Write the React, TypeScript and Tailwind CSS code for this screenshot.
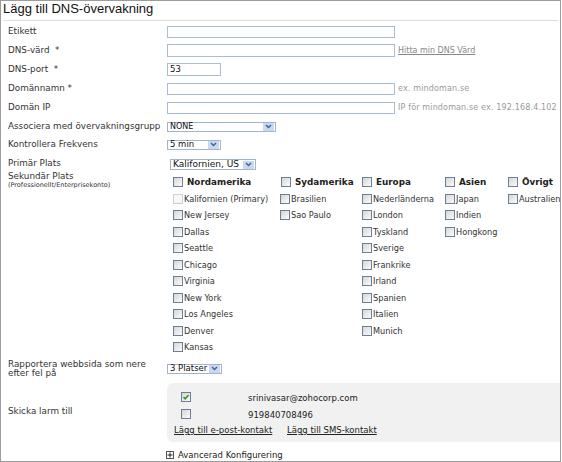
import React from "react";

function Cb({ disabled, checked }: { disabled?: boolean; checked?: boolean }) {
  return (
    <span
      className={
        "inline-flex shrink-0 w-[10px] h-[10px] border items-center justify-center " +
        (disabled
          ? "border-[#cfcfcf] bg-[#f7f7f7]"
          : "border-[#6d7f98] bg-gradient-to-br from-[#d6d6d6] to-[#fbfbfb]")
      }
    >
      {checked && (
        <svg width="8" height="8" viewBox="0 0 8 8">
          <path d="M1.5 4.2 L3.2 5.8 L6.6 2" fill="none" stroke="#2e9a2e" strokeWidth="1.6" />
        </svg>
      )}
    </span>
  );
}

function Arrow() {
  return (
    <span className="ml-auto mr-[1px] flex items-center justify-center w-[11px] h-[8px] bg-[#c9d8ee]">
      <svg width="7" height="5" viewBox="0 0 7 5">
        <path d="M1 1 L3.5 3.5 L6 1" fill="none" stroke="#3f64a6" strokeWidth="1.5" />
      </svg>
    </span>
  );
}

function Sel({ cls, label }: { cls: string; label: string }) {
  return (
    <div className={"flex items-center border border-[#a4b5ca] bg-white text-[#111] " + cls}>
      <span className="pl-[2px] leading-none">{label}</span>
      <Arrow />
    </div>
  );
}

function Input({ cls, value }: { cls: string; value?: string }) {
  return (
    <div className={"border border-[#a9bdd6] bg-white flex items-center text-[#111] " + cls}>
      {value && <span className="pl-[2px] text-[8.5px] leading-none">{value}</span>}
    </div>
  );
}

function Row({ label, h, children }: { label: React.ReactNode; h: string; children?: React.ReactNode }) {
  return (
    <div className={"flex items-center " + h}>
      <div className="w-[166px] pl-[7px] shrink-0 text-[8.8px] whitespace-nowrap">{label}</div>
      <div className="flex items-center">{children}</div>
    </div>
  );
}

const cols: { title: string; w: string; hx: string; items: string[] }[] = [
  {
    title: "Nordamerika",
    w: "w-[107px]",
    hx: "",
    items: [
      "Kalifornien (Primary)",
      "New Jersey",
      "Dallas",
      "Seattle",
      "Chicago",
      "Virginia",
      "New York",
      "Los Angeles",
      "Denver",
      "Kansas",
    ],
  },
  { title: "Sydamerika", w: "w-[82px]", hx: "pl-[1px]", items: ["Brasilien", "Sao Paulo"] },
  {
    title: "Europa",
    w: "w-[83px]",
    hx: "",
    items: [
      "Nederländerna",
      "London",
      "Tyskland",
      "Sverige",
      "Frankrike",
      "Irland",
      "Spanien",
      "Italien",
      "Munich",
    ],
  },
  { title: "Asien", w: "w-[63px]", hx: "", items: ["Japan", "Indien", "Hongkong"] },
  { title: "Övrigt", w: "w-[54px]", hx: "", items: ["Australien"] },
];

export default function App() {
  return (
    <div className="w-[562px] h-[462px] bg-white font-['DejaVu_Sans','Verdana',sans-serif] text-[#333] text-[8.5px] overflow-hidden">
      <div className="w-[561px] h-[462px] border border-[#9c9c9c] overflow-hidden">
        <div className="h-[19px] pl-[2px] font-['Liberation_Sans','Arial',sans-serif] text-[13px] leading-[16px] text-[#111]">
          Lägg till DNS-övervakning
        </div>
        <div className="mx-[2px] h-[1px] bg-[#dcdcdc]" />
        <div className="mt-[1px] flex flex-col">
          <Row label="Etikett" h="h-[19px]">
            <Input cls="w-[228px] h-[12px]" />
          </Row>
          <Row label={"DNS-värd\u00a0 *"} h="h-[19px]">
            <Input cls="w-[228px] h-[13px]" />
            <span className="ml-[3px] text-[8px] text-[#888] underline">Hitta min DNS Värd</span>
          </Row>
          <Row label={"DNS-port\u00a0 *"} h="h-[19px]">
            <Input cls="w-[54px] h-[13px]" value="53" />
          </Row>
          <Row label="Domännamn *" h="h-[19px]">
            <Input cls="w-[228px] h-[12px]" />
            <span className="ml-[3px] text-[8px] tracking-[0.15px] text-[#9a9a9a]">ex. mindoman.se</span>
          </Row>
          <Row label="Domän IP" h="h-[19px]">
            <Input cls="w-[228px] h-[12px]" />
            <span className="ml-[3px] text-[8px] tracking-[0.15px] text-[#9a9a9a]">
              IP för mindoman.se ex. 192.168.4.102
            </span>
          </Row>
          <Row label="Associera med övervakningsgrupp" h="h-[19px]">
            <Sel cls="w-[109px] h-[10px] text-[8px]" label="NONE" />
          </Row>
          <Row label="Kontrollera Frekvens" h="h-[17px]">
            <Sel cls="w-[54px] h-[10px] text-[8.5px]" label="5 min" />
          </Row>
          <div className="mt-[4px]">
            <Row label="Primär Plats" h="h-[13px]">
              <div className="ml-[3px] mt-[2px]">
                <Sel cls="w-[86px] h-[11px] text-[9px]" label="Kalifornien, US" />
              </div>
            </Row>
          </div>
          <div className="flex">
            <div className="w-[166px] pl-[7px] shrink-0 pt-[2px]">
              <div className="leading-[9px] text-[8.8px]">Sekundär Plats</div>
              <div className="text-[6.5px] leading-[8px]">(Professionellt/Enterprisekonto)</div>
            </div>
            <div className="flex ml-[6px] pt-[4px]">
              {cols.map((c) => (
                <div key={c.title} className={"flex flex-col shrink-0 " + c.w}>
                  <div className={"h-[16.5px] flex items-center gap-[4px] " + c.hx}>
                    <Cb />
                    <span className="font-bold text-[8.8px] text-[#222]">{c.title}</span>
                  </div>
                  {c.items.map((it, i) => (
                    <div key={it} className="h-[16.5px] flex items-center gap-[1px] text-[8.2px]">
                      <Cb disabled={c.title === "Nordamerika" && i === 0} />
                      <span className="whitespace-nowrap">{it}</span>
                    </div>
                  ))}
                </div>
              ))}
            </div>
          </div>
          <div className="mt-[1px]">
            <Row
              label={
                <div className="leading-[9px]">
                  Rapportera webbsida som nere
                  <br />
                  efter fel på
                </div>
              }
              h="h-[24px]"
            >
              <Sel cls="w-[55px] h-[10px] text-[8.5px]" label="3 Platser" />
            </Row>
          </div>
          <div className="flex items-center mt-[2px]">
            <div className="w-[166px] pl-[7px] shrink-0 text-[8.8px]">Skicka larm till</div>
            <div className="flex-1 h-[59px] bg-[#f0f1f0] rounded-l-[6px] flex flex-col text-[#222]">
              <div className="h-[16px] mt-[8px] flex items-center">
                <div className="w-[81px] pl-[14px]">
                  <Cb checked />
                </div>
                <span>srinivasar@zohocorp.com</span>
              </div>
              <div className="h-[18px] flex items-center">
                <div className="w-[81px] pl-[14px]">
                  <Cb />
                </div>
                <span>919840708496</span>
              </div>
              <div className="h-[12px] flex items-center pl-[7px]">
                <span className="underline w-[113px]">Lägg till e-post-kontakt</span>
                <span className="underline">Lägg till SMS-kontakt</span>
              </div>
            </div>
          </div>
          <div className="flex items-center mt-[7px] pl-[165px] gap-[4px] text-[#222]">
            <span className="w-[8px] h-[8px] border border-[#555] bg-white flex items-center justify-center">
              <svg width="6" height="6" viewBox="0 0 6 6">
                <path d="M3 0.5 V5.5 M0.5 3 H5.5" stroke="#222" strokeWidth="1" />
              </svg>
            </span>
            <span>Avancerad Konfigurering</span>
          </div>
        </div>
      </div>
    </div>
  );
}
